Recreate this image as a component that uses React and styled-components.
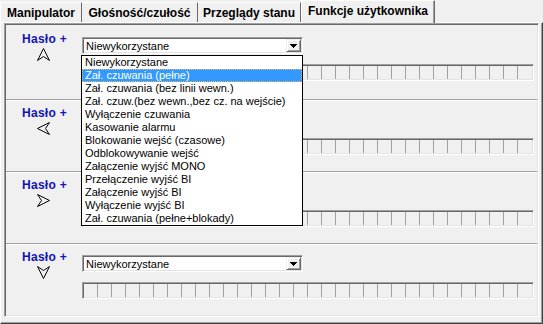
import React from "react";
import styled, { createGlobalStyle } from "styled-components";

const GlobalStyle = createGlobalStyle`
    html, body {
        margin: 0;
        padding: 0;
        background: #f0f0f0;
    }
    body {
        font-family: "Liberation Sans", Arial, sans-serif;
    }
`;

const TABS = [
    { label: "Manipulator", w: 82 },
    { label: "Głośność/czułość", w: 116 },
    { label: "Przeglądy stanu", w: 103 },
    { label: "Funkcje użytkownika", w: 134, active: true },
];

const OPTIONS = [
    "Niewykorzystane",
    "Zał. czuwania (pełne)",
    "Zał. czuwania (bez linii wewn.)",
    "Zał. czuw.(bez wewn.,bez cz. na wejście)",
    "Wyłączenie czuwania",
    "Kasowanie alarmu",
    "Blokowanie wejść (czasowe)",
    "Odblokowywanie wejść",
    "Załączenie wyjść MONO",
    "Przełączenie wyjść BI",
    "Załączenie wyjść BI",
    "Wyłączenie wyjść BI",
    "Zał. czuwania (pełne+blokady)",
];

const ARROWS = {
    up: "7.5,1.5 13.5,13.5 7.5,9.5 1.5,13.5",
    left: "1.5,7.5 13.5,1.5 9.5,7.5 13.5,13.5",
    right: "13.5,7.5 1.5,1.5 5.5,7.5 1.5,13.5",
    down: "7.5,13.5 13.5,1.5 7.5,5.5 1.5,1.5",
};

const SECTIONS = [
    { dir: "up", open: true },
    { dir: "left" },
    { dir: "right" },
    { dir: "down" },
];

const sunken = `
    border-top: 1px solid #a0a0a0;
    border-left: 1px solid #a0a0a0;
    border-bottom: 1px solid #fff;
    border-right: 1px solid #fff;
    box-shadow: inset 1px 1px #696969, inset -1px -1px #e3e3e3;
`;

const Window = styled.div`
    width: 543px;
    height: 324px;
    display: flex;
    flex-direction: column;
    background: #f0f0f0;
    overflow: hidden;
`;

const TabStrip = styled.div`
    height: 22px;
    flex-shrink: 0;
    display: flex;
    align-items: flex-end;
`;

const Tab = styled.div`
    box-sizing: border-box;
    width: ${p => p.$w}px;
    height: ${p => p.$active ? 23 : 20}px;
    margin-bottom: ${p => p.$active ? -1 : 0}px;
    position: relative;
    z-index: ${p => p.$active ? 2 : 0};
    padding-top: 3px;
    background: #f0f0f0;
    border-top: 1px solid #fff;
    border-left: ${p => p.$active || p.$first ? "1px solid #fff" : "none"};
    border-right: 1px solid #696969;
    box-shadow: ${p => p.$active ? "inset -1px 0 #a0a0a0" : "none"};
    font-size: 12px;
    font-weight: bold;
    line-height: 14px;
    text-align: center;
    white-space: nowrap;
    color: #000;
`;

const Page = styled.div`
    flex: 1;
    display: flex;
    flex-direction: column;
    box-sizing: border-box;
    border-top: 1px solid #fff;
    border-left: 1px solid #fff;
    border-right: 1px solid #404040;
    border-bottom: 1px solid #404040;
    box-shadow: inset -1px -1px #a0a0a0;
    padding: 0 3px 6px 3px;
`;

const ScrollBox = styled.div`
    flex: 1;
    display: flex;
    flex-direction: column;
    padding: 1px;
    ${sunken}
`;

const Section = styled.div`
    box-sizing: border-box;
    height: ${p => p.$first ? 74 : 70}px;
    flex-shrink: 0;
    display: grid;
    grid-template-columns: 76px 452px;
    padding-top: ${p => p.$first ? 2 : 0}px;
`;

const Divider = styled.div`
    box-sizing: border-box;
    height: 2px;
    flex-shrink: 0;
    border-top: 1px solid #a0a0a0;
    border-bottom: 1px solid #fff;
`;

const LeftCol = styled.div`
    display: flex;
    flex-direction: column;
    align-items: center;
    padding-top: 5px;
`;

const Label = styled.div`
    font-size: 12px;
    font-weight: bold;
    line-height: 14px;
    letter-spacing: 0.3px;
    color: #1414b4;
    white-space: nowrap;
    padding-left: 1px;
`;

const ArrowIcon = styled.svg`
    display: block;
    margin-top: 1px;
    margin-right: 2px;
`;

const RightCol = styled.div`
    padding-top: 10px;
`;

const Combo = styled.div`
    position: relative;
    box-sizing: border-box;
    width: 221px;
    height: 17px;
    background: #fff;
    ${sunken}
    display: flex;
    align-items: center;
    justify-content: space-between;
    padding: 0 1px 0 3px;
    font-size: 11px;
    color: #000;
`;

const DropButton = styled.div`
    box-sizing: border-box;
    width: 15px;
    height: 13px;
    background: #f0f0f0;
    border-top: 1px solid #f0f0f0;
    border-left: 1px solid #f0f0f0;
    border-bottom: 1px solid #696969;
    border-right: 1px solid #696969;
    box-shadow: inset 1px 1px #fff, inset -1px -1px #a0a0a0;
    display: flex;
    align-items: center;
    justify-content: center;
`;

const List = styled.ul`
    position: absolute;
    left: -2px;
    top: 17px;
    width: 222px;
    box-sizing: border-box;
    margin: 0;
    padding: 0;
    list-style: none;
    background: #fff;
    border: 1px solid #000;
    z-index: 5;
`;

const Item = styled.li`
    height: 13px;
    line-height: 13px;
    padding-left: 3px;
    font-size: 11px;
    white-space: nowrap;
    background: ${p => p.$selected ? "#3399ff" : "transparent"};
    color: ${p => p.$selected ? "#fff" : "#000"};
    outline: ${p => p.$selected ? "1px dotted #d8c070" : "none"};
    outline-offset: -1px;
`;

const Bar = styled.div`
    box-sizing: border-box;
    width: 452px;
    height: 17px;
    margin-top: 10px;
    padding: 1px;
    display: flex;
    ${sunken}
`;

const Cell = styled.div`
    box-sizing: border-box;
    flex: 0 0 14px;
    border-right: 1px solid #a0a0a0;

    &:last-child {
        border-right: none;
    }
`;

const DownArrow = () => (
    <svg width="7" height="4" viewBox="0 0 7 4">
        <path d="M0 0h7v1H0zM1 1h5v1H1zM2 2h3v1H2zM3 3h1v1H3z" fill="#000" />
    </svg>
);

const Arrow = ({ dir }) => (
    <ArrowIcon width="15" height="15" viewBox="0 0 15 15">
        <polygon points={ARROWS[dir]} fill="none" stroke="#000" strokeWidth="1" strokeLinejoin="miter" />
    </ArrowIcon>
);

const UserFunction = ({ dir, open, first }) => (
    <Section $first={first}>
        <LeftCol>
            <Label>Hasło +</Label>
            <Arrow dir={dir} />
        </LeftCol>
        <RightCol>
            <Combo>
                <span>Niewykorzystane</span>
                <DropButton><DownArrow /></DropButton>
                {open
                    ? <List>
                        {OPTIONS.map((o, i) => <Item key={o} $selected={i === 1}>{o}</Item>)}
                    </List>
                    : null}
            </Combo>
            <Bar>
                {Array.from({ length: 32 }).map((_, i) => <Cell key={i} />)}
            </Bar>
        </RightCol>
    </Section>
);

export default function App() {
    return <>
        <GlobalStyle />
        <Window>
            <TabStrip>
                {TABS.map((t, i) => <Tab key={t.label} $w={t.w} $active={t.active} $first={i === 0}>
                    {t.label}
                </Tab>)}
            </TabStrip>
            <Page>
                <ScrollBox>
                    {SECTIONS.map((s, i) => <React.Fragment key={s.dir}>
                        {i > 0 ? <Divider /> : null}
                        <UserFunction dir={s.dir} open={s.open} first={i === 0} />
                    </React.Fragment>)}
                </ScrollBox>
            </Page>
        </Window>
    </>;
}
